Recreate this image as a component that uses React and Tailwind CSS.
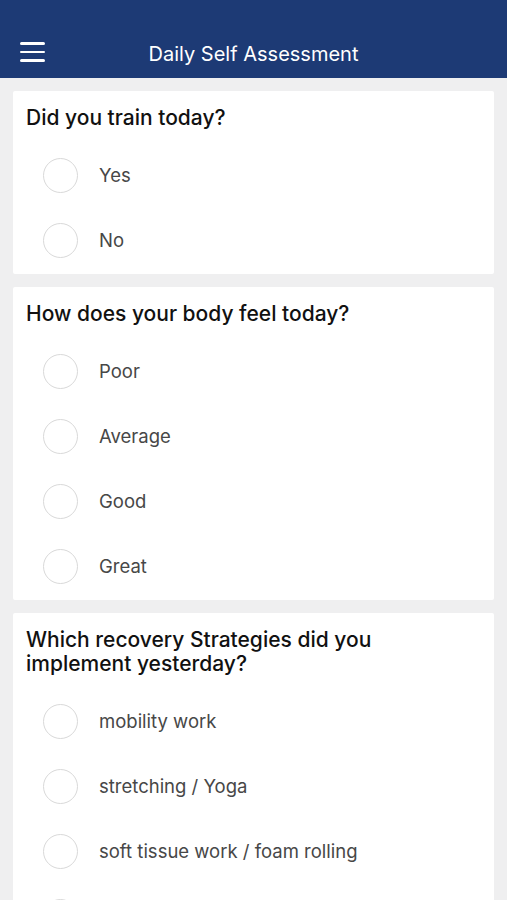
const questions = [
  { title: 'Did you train today?', options: ['Yes', 'No'] },
  { title: 'How does your body feel today?', options: ['Poor', 'Average', 'Good', 'Great'] },
  {
    title: 'Which recovery Strategies did you implement yesterday?',
    // last row is cut off by the bottom of the screen, only its radio shows
    options: ['mobility work', 'stretching / Yoga', 'soft tissue work / foam rolling', ''],
  },
];

export default function App() {
  return (
    <div className="h-[900px] overflow-hidden bg-[#efeff0]" style={{ fontFamily: 'Inter, "Liberation Sans", sans-serif' }}>
      {/* Header */}
      <div className="h-[78px] bg-[#1d3a75] flex items-end pb-[14px] relative">
        <button className="absolute left-[20px] top-[42px] flex flex-col gap-[6px]">
          <span className="block w-[25px] h-[2.5px] bg-white rounded" />
          <span className="block w-[25px] h-[2.5px] bg-white rounded" />
          <span className="block w-[25px] h-[2.5px] bg-white rounded" />
        </button>
        <h1 className="w-full text-center text-white text-[20px] leading-[24px] translate-y-[2px]">Daily Self Assessment</h1>
      </div>

      {/* Questions */}
      <div className="px-[13px] pt-[13px] flex flex-col gap-[13px]">
        {questions.map(q => (
          <div key={q.title} className="bg-white rounded-[2px] pb-[1.5px]">
            <div className="px-[13px] pt-[15px] pb-[12.5px] pr-[100px] text-[21px] leading-[24px] text-[#111] font-medium">{q.title}</div>
            {q.options.map((o, i) => (
              <div key={i} className="h-[65px] flex items-center">
                <span className="ml-[30px] w-[35px] h-[35px] rounded-full border border-[#d9d9d9] shrink-0" />
                <span className="ml-[21px] text-[18.5px] text-[#474747] translate-y-[1px]">{o}</span>
              </div>
            ))}
          </div>
        ))}
      </div>
    </div>
  );
}
